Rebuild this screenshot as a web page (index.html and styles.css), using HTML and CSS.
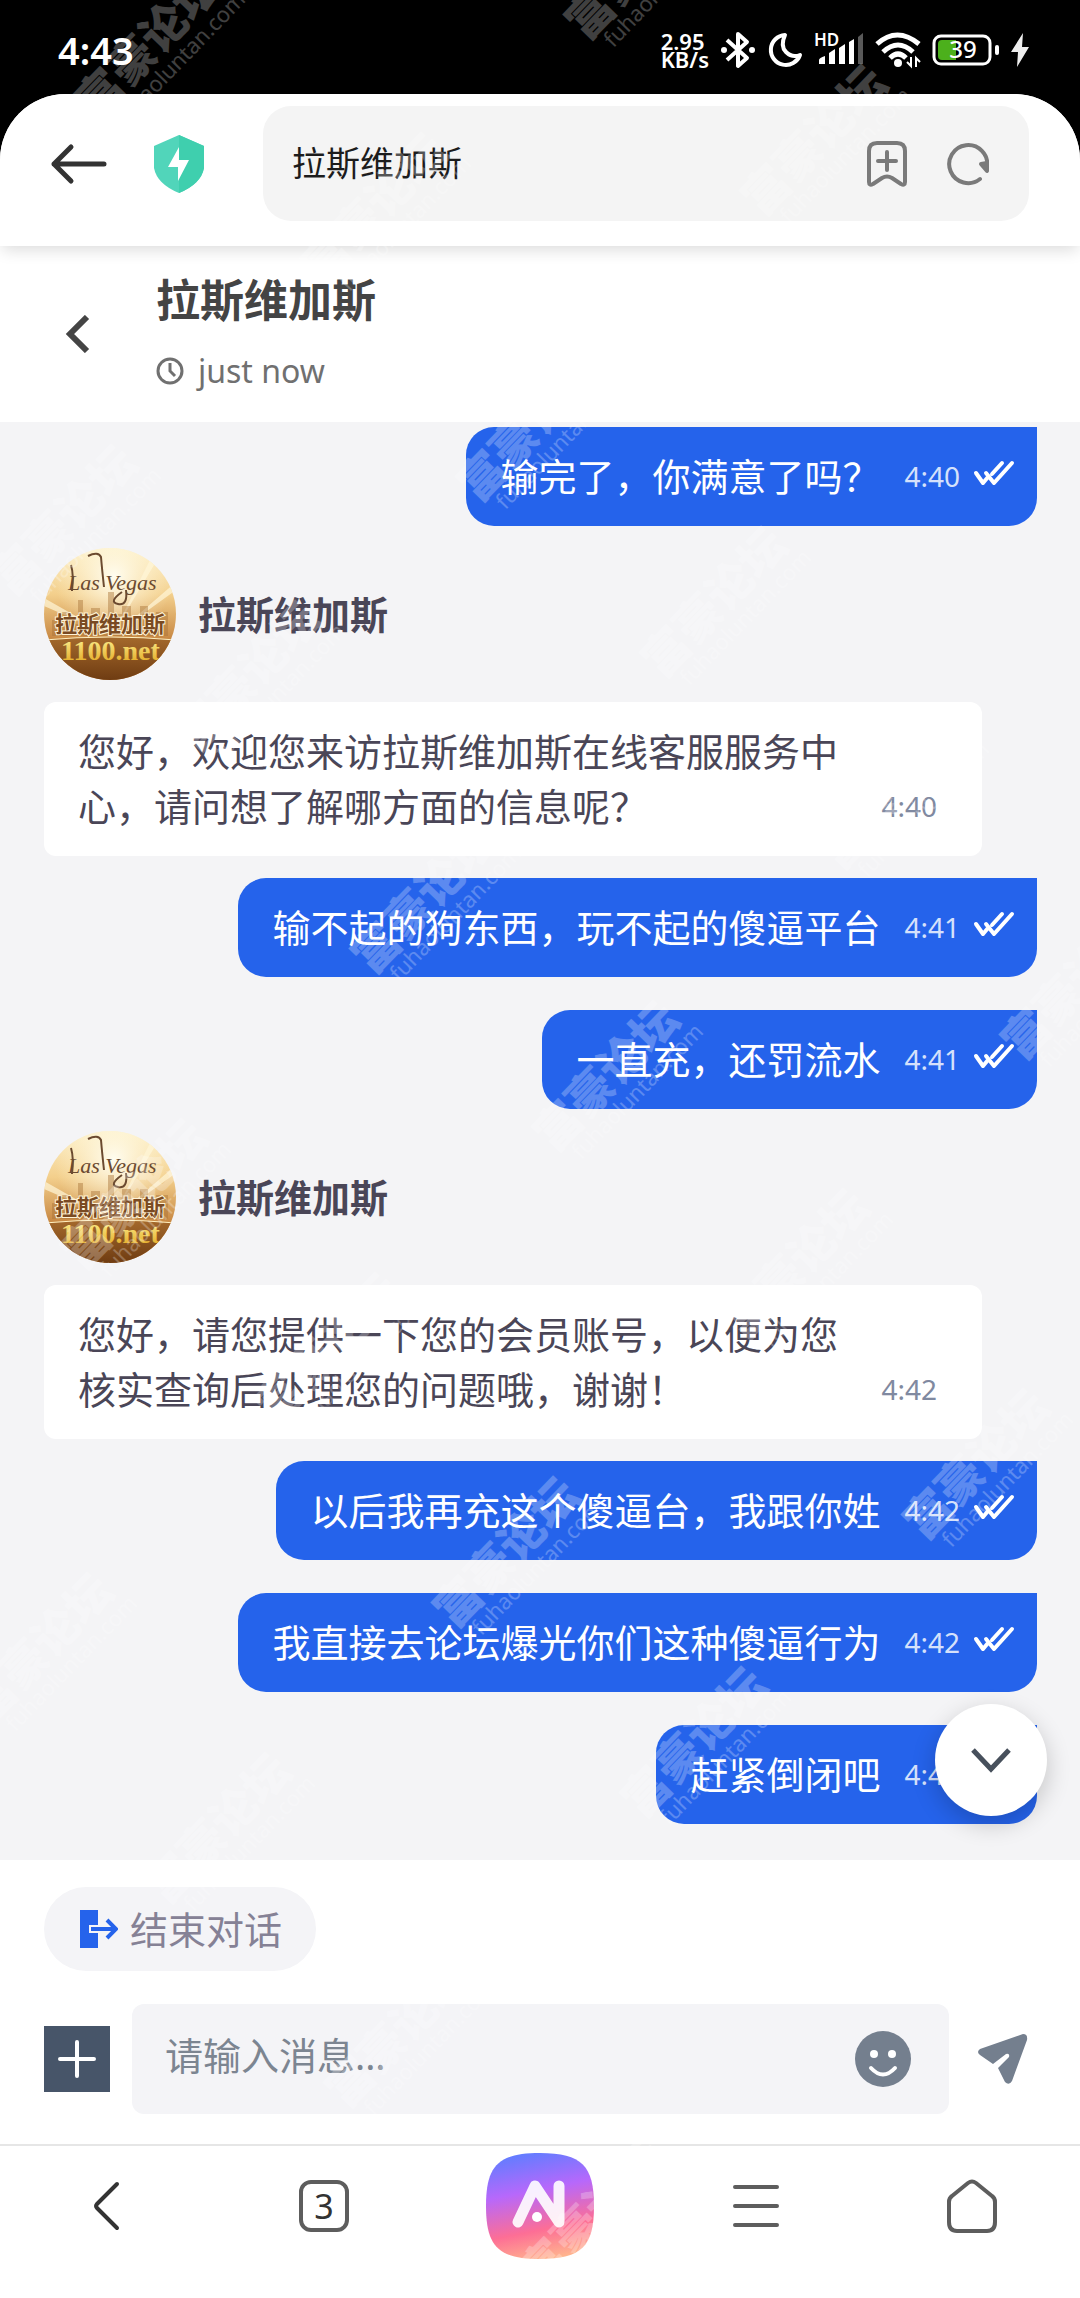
FILE: index.html
```html
<!DOCTYPE html>
<html lang="zh-CN">
<head>
<meta charset="utf-8">
<meta name="viewport" content="width=device-width, initial-scale=1">
<title>拉斯维加斯</title>
<link rel="stylesheet" href="styles.css">
</head>
<body>
<svg class="defs" aria-hidden="true">
  <defs>
    <symbol id="read" viewBox="0 0 42 26">
      <path d="M3 13l7 10 5-6M13 13l8 10L39 3M29 3L19 14" fill="none" stroke="currentColor" stroke-width="4" stroke-linecap="round" stroke-linejoin="round"/>
    </symbol>
    <linearGradient id="sky" x1="0" y1="0" x2="0" y2="1">
      <stop offset="0" stop-color="#fdf0c8"/><stop offset=".35" stop-color="#f3cf8c"/><stop offset=".68" stop-color="#c98a45"/>
    </linearGradient>
    <radialGradient id="glow"><stop offset="0" stop-color="#fffdf0"/><stop offset="1" stop-color="#fff3cf" stop-opacity="0"/></radialGradient>
    <linearGradient id="ground" x1="0" y1="0" x2="0" y2="1"><stop offset="0" stop-color="#a4692c"/><stop offset="1" stop-color="#6f3c12"/></linearGradient>
    <linearGradient id="gold" x1="0" y1="0" x2="0" y2="1"><stop offset="0" stop-color="#fff79a"/><stop offset="1" stop-color="#e0a21a"/></linearGradient>
    <clipPath id="round"><circle cx="66" cy="66" r="66"/></clipPath>
    <symbol id="avatar" viewBox="0 0 132 132">
      <g clip-path="url(#round)">
        <rect width="132" height="132" fill="url(#sky)"/>
        <circle cx="70" cy="28" r="60" fill="url(#glow)"/>
        <path d="M74 84L132 34v8zM70 84L108 8l5 4zM60 84L0 50v8z" fill="#fff6d8" opacity=".7"/>
        <path d="M8 88V72h8v-8h10v12h8V52h5v20h8V60h9v12h8V44h6v22h8v-8h9v14h9V58h8v14h8v-8h12v24z" fill="#a97438" opacity=".45"/>
        <path d="M0 92q66-6 132 0v40H0z" fill="url(#ground)"/>
        <path d="M0 92q66-6 132 0" fill="none" stroke="#fff0c0"/>
        <text class="logo-script" x="24" y="42">Las Vegas</text>
        <path d="M27 17q3 10 1 26M44 8q10-5 13 1 1 12 3 30M82 42q2 16-8 14-10-2 4-12" fill="none" stroke="#6b4a30" stroke-width="2"/>
        <text class="logo-name" x="11" y="84">拉斯维加斯</text>
        <text class="logo-url" x="17" y="112">1100.net</text>
      </g>
    </symbol>
    <g id="stamp" transform="rotate(-46)">
      <text class="stamp-name" x="-92" y="14">富豪论坛</text>
      <text class="stamp-url" x="-78" y="38">fuhaoluntan.com</text>
    </g>
  </defs>
</svg>

<header class="status">
  <time class="clock">4:43</time>
  <div class="status-icons">
    <span class="rate">2.95<br>KB/s</span>
    <svg width="36" height="38" viewBox="0 0 36 38" fill="none" stroke="#fff" stroke-width="4" aria-label="蓝牙"><path d="M7 9l20 18-9 8V3l9 8L7 29" stroke-linejoin="round"/><circle cx="4" cy="19" r="3" fill="#fff" stroke="none"/><circle cx="32" cy="19" r="3" fill="#fff" stroke="none"/></svg>
    <svg width="36" height="36" viewBox="0 0 36 36" fill="none" stroke="#fff" stroke-width="4" stroke-linejoin="round" aria-label="勿扰"><path d="M18 3A15 15 0 1 0 33 23Q25 26 19 20T18 3z"/></svg>
    <svg width="50" height="34" viewBox="0 0 50 34" fill="#fff" aria-label="信号"><text class="hd" x="0" y="13">HD</text><path d="M5 31v-4q0-2 6-4v8z M15 20l6-4v15h-6z M25 15l6-4v20h-6z M35 9l5-3v25h-5z"/><path d="M44 4l5-4v31h-5z" opacity=".35"/></svg>
    <svg width="46" height="36" viewBox="0 0 46 36" fill="none" stroke="#fff" stroke-width="5" aria-label="无线网络"><path d="M2 12Q22-6 44 12M8 20Q23 6 38 20M15 26q8-8 16 0"/><circle cx="23" cy="31" r="4" fill="#fff" stroke="none"/><path d="M36 25v9l-4-4M41 35v-9l4 4" stroke-width="2"/></svg>
    <svg width="68" height="32" viewBox="0 0 68 32" aria-label="电量"><rect x="2" y="2" width="56" height="28" rx="7" fill="none" stroke="#fff" stroke-width="3"/><path d="M10 6h14v20H10q-4 0-4-4V10q0-4 4-4z" fill="#4cb01c"/><rect x="63" y="11" width="4" height="10" rx="2" fill="#fff"/><text class="charge" x="31" y="24" text-anchor="middle">39</text></svg>
    <svg width="18" height="34" viewBox="0 0 18 34" fill="#eee" aria-label="充电中"><path d="M12 0L0 19h7l-1 15 12-20h-7z"/></svg>
  </div>
</header>

<div class="sheet">
  <div class="toolbar">
    <button class="icon-button" aria-label="返回"><svg width="58" height="42" viewBox="0 0 58 42" fill="none" stroke="#333" stroke-width="5" stroke-linecap="round" stroke-linejoin="round"><path d="M54 21H4M21 4L4 21l17 17"/></svg></button>
    <svg class="shield" width="50" height="58" viewBox="0 0 50 58" aria-label="安全"><path d="M25 0l25 11v22q-3 16-25 25Q3 49 0 33V11z" fill="#51d5ba"/><path d="M25 0l25 11v22q-3 16-25 25z" fill="#3fcfae"/><path d="M25 12L14 32h10v14l11-21H25z" fill="#fff"/></svg>
    <div class="address">
      <span class="address-title">拉斯维加斯</span>
      <button class="icon-button" aria-label="收藏"><svg width="40" height="46" viewBox="0 0 40 46" fill="none" stroke="#7a7a7a" stroke-width="4" stroke-linecap="round" stroke-linejoin="round"><path d="M2 10q0-8 8-8h20q8 0 8 8v31q0 4-4 2l-9-6q-5-3-10 0l-9 6q-4 2-4-2zM20 11v18M11 20h18"/></svg></button>
      <button class="icon-button" aria-label="刷新"><svg width="42" height="44" viewBox="0 0 42 44" fill="none" stroke="#7a7a7a" stroke-width="4" stroke-linecap="round"><path d="M33 37A19 19 0 1 1 40 25"/><path d="M34 22l6 7V21z" fill="#7a7a7a" stroke-linejoin="round"/></svg></button>
    </div>
  </div>

  <section class="chat-head">
    <button class="icon-button back" aria-label="返回"><svg width="26" height="38" viewBox="0 0 26 38" fill="none" stroke="#444" stroke-width="6"><path d="M23 2L6 19l17 17"/></svg></button>
    <div class="chat-head-text">
      <h1>拉斯维加斯</h1>
      <p class="seen"><svg width="28" height="28" viewBox="0 0 28 28" fill="none" stroke="#707070" stroke-width="3"><circle cx="14" cy="14" r="12"/><path d="M14 6v8l5 5"/></svg>just now</p>
    </div>
  </section>

  <main class="chat">
    <div class="sent"><p>输完了，你满意了吗？</p><time>4:40</time><svg class="read"><use href="#read"/></svg></div>
    <article class="received">
      <div class="sender"><svg class="avatar"><use href="#avatar"/></svg><h2>拉斯维加斯</h2></div>
      <div class="bubble"><p>您好，欢迎您来访拉斯维加斯在线客服服务中心，请问想了解哪方面的信息呢？</p><time>4:40</time></div>
    </article>
    <div class="group">
      <div class="sent"><p>输不起的狗东西，玩不起的傻逼平台</p><time>4:41</time><svg class="read"><use href="#read"/></svg></div>
      <div class="sent"><p>一直充，还罚流水</p><time>4:41</time><svg class="read"><use href="#read"/></svg></div>
    </div>
    <article class="received">
      <div class="sender"><svg class="avatar"><use href="#avatar"/></svg><h2>拉斯维加斯</h2></div>
      <div class="bubble"><p>您好，请您提供一下您的会员账号，以便为您核实查询后处理您的问题哦，谢谢！</p><time>4:42</time></div>
    </article>
    <div class="group">
      <div class="sent"><p>以后我再充这个傻逼台，我跟你姓</p><time>4:42</time><svg class="read"><use href="#read"/></svg></div>
      <div class="sent"><p>我直接去论坛爆光你们这种傻逼行为</p><time>4:42</time><svg class="read"><use href="#read"/></svg></div>
      <div class="sent"><p>赶紧倒闭吧</p><time>4:42</time><svg class="read"><use href="#read"/></svg></div>
    </div>
    <button class="scroll-down" aria-label="滚动到底部"><svg width="40" height="26" viewBox="0 0 40 26" fill="none" stroke="#47505c" stroke-width="5"><path d="M2 3l18 19L38 3"/></svg></button>
  </main>

  <form class="composer" onsubmit="return false">
    <button class="chip" type="button"><svg width="38" height="38" viewBox="0 0 38 38"><path d="M0 0h18v15H9v8h9v15H0z" fill="#2563eb"/><path d="M11 19h25M27 10l9 9-9 9" fill="none" stroke="#2563eb" stroke-width="4"/></svg>结束对话</button>
    <div class="compose-row">
      <button class="add" type="button" aria-label="添加附件"><svg width="38" height="38" viewBox="0 0 38 38" stroke="#fff" stroke-width="4" stroke-linecap="round"><path d="M19 2v34M2 19h34"/></svg></button>
      <div class="field">
        <input type="text" aria-label="消息" placeholder="请输入消息...">
        <button class="icon-button" type="button" aria-label="表情"><svg width="56" height="56" viewBox="0 0 56 56"><circle cx="28" cy="28" r="28" fill="#747f8e"/><circle cx="19" cy="23" r="4" fill="#fff"/><circle cx="37" cy="23" r="4" fill="#fff"/><path d="M16 37q12 13 24 0" fill="none" stroke="#fff" stroke-width="4" stroke-linecap="round"/></svg></button>
      </div>
      <button class="icon-button" aria-label="发送"><svg width="50" height="52" viewBox="0 0 50 52"><path d="M45 1q5 0 4 6L34 48q-3 5-7 1L20 35 31 24q1-4-3-3L15 31 2 22q-4-3 0-6z" fill="#747f8e"/></svg></button>
    </div>
  </form>

  <nav class="browser-nav" aria-label="浏览器">
    <button class="icon-button" aria-label="后退"><svg width="28" height="50" viewBox="0 0 28 50" fill="none" stroke="#333" stroke-width="4" stroke-linecap="round" stroke-linejoin="round"><path d="M23 3L3 23q-2 2 0 4l20 20"/></svg></button>
    <button class="tabs" aria-label="3 个标签页">3</button>
    <button class="icon-button" aria-label="AI">
      <svg width="108" height="106" viewBox="0 0 108 106">
        <defs><linearGradient id="ai" x1=".4" y1="0" x2=".6" y2="1"><stop offset="0" stop-color="#647cff"/><stop offset=".35" stop-color="#b768fb"/><stop offset=".72" stop-color="#fd6e95"/><stop offset="1" stop-color="#ffb58e"/></linearGradient></defs>
        <path d="M54 0c42 0 54 13 54 53s-12 53-54 53S0 93 0 53 12 0 54 0z" fill="url(#ai)"/>
        <path d="M32 69l17-36 24 36V33" fill="none" stroke="#fff" stroke-width="11" stroke-linecap="round" stroke-linejoin="round" opacity=".9"/><circle cx="51" cy="64" r="5" fill="#fff"/>
      </svg>
    </button>
    <button class="icon-button" aria-label="菜单"><svg width="46" height="44" viewBox="0 0 46 44" stroke="#5d5d5d" stroke-width="4" stroke-linecap="round"><path d="M2 3h42M2 22h42M2 41h42"/></svg></button>
    <button class="icon-button" aria-label="主页"><svg width="50" height="54" viewBox="0 0 50 54" fill="none" stroke="#5d5d5d" stroke-width="4" stroke-linejoin="round"><path d="M2 23q0-4 3-6L21 4q4-3 8 0l16 13q3 2 3 6v20q0 9-8 9H10q-8 0-8-9z"/></svg></button>
  </nav>
</div>

<svg class="watermarks" aria-hidden="true">
  <use href="#stamp" x="150" y="46"/>
  <use href="#stamp" x="640" y="-34"/>
  <use href="#stamp" x="816" y="142"/>
  <use href="#stamp" x="376" y="210"/>
  <use href="#stamp" x="532" y="428"/>
  <use href="#stamp" x="66" y="522"/>
  <use href="#stamp" x="716" y="604"/>
  <use href="#stamp" x="250" y="678"/>
  <use href="#stamp" x="426" y="900"/>
  <use href="#stamp" x="894" y="796"/>
  <use href="#stamp" x="608" y="1078"/>
  <use href="#stamp" x="1076" y="986"/>
  <use href="#stamp" x="136" y="1196"/>
  <use href="#stamp" x="798" y="1266"/>
  <use href="#stamp" x="330" y="1350"/>
  <use href="#stamp" x="508" y="1554"/>
  <use href="#stamp" x="978" y="1466"/>
  <use href="#stamp" x="42" y="1650"/>
  <use href="#stamp" x="696" y="1744"/>
  <use href="#stamp" x="220" y="1830"/>
  <use href="#stamp" x="400" y="2034"/>
  <use href="#stamp" x="594" y="2216"/>
</svg>
</body>
</html>
```
FILE: styles.css
```css
* {
  box-sizing: border-box;
}

body {
  position: relative;
  display: flex;
  flex-direction: column;
  min-height: 100vh;
  margin: 0;
  overflow-x: hidden;
  background: #000;
  font-family: "Noto Sans", "Noto Sans CJK SC", sans-serif;
  font-size: 38px;
  line-height: 55px;
  color: #4a4657;
}

h1, h2, p {
  margin: 0;
}

svg {
  display: block;
  flex: none;
}

button {
  padding: 0;
  border: 0;
  background: none;
  font: inherit;
  color: inherit;
}

.defs {
  position: absolute;
  width: 0;
  height: 0;
}

.icon-button {
  display: flex;
  flex: none;
}

/* status bar */
.status {
  display: flex;
  align-items: center;
  justify-content: space-between;
  height: 94px;
  padding: 6px 51px 0 58px;
  color: #fff;
}

.status-icons {
  display: flex;
  align-items: center;
  gap: 11px;
}

.status-icons svg {
  overflow: visible;
}

.rate {
  font-size: 22px;
  font-weight: 600;
  line-height: 18px;
}

.hd {
  font-size: 17px;
  font-weight: 600;
}

.charge {
  font-size: 24px;
  font-weight: 500;
  fill: #fff;
}

/* browser */
.sheet {
  display: flex;
  flex: 1;
  flex-direction: column;
  border-radius: 66px 66px 0 0;
  background: #fff;
}

.toolbar {
  position: relative;
  display: flex;
  align-items: center;
  padding: 12px 51px 25px 50px;
  border-radius: 66px 66px 0 0;
  background: #fff;
  box-shadow: 0 6px 16px -2px rgb(0 0 0 / 14%);
  clip-path: inset(0 0 -24px 0);
}

.shield {
  margin: 0 59px 0 46px;
}

.address {
  display: flex;
  flex: 1;
  align-items: center;
  gap: 40px;
  height: 115px;
  padding: 0 40px 0 29px;
  border-radius: 28px;
  background: #f4f4f4;
}

.address-title {
  flex: 1;
  font-size: 34px;
  color: #1c1c1c;
}

/* conversation header */
.chat-head {
  display: flex;
  align-items: center;
  gap: 66px;
  height: 176px;
  padding-left: 64px;
}

.chat-head h1 {
  font-size: 44px;
  font-weight: 600;
  line-height: 62px;
  color: #444;
}

.chat-head-text {
  display: flex;
  flex-direction: column;
  gap: 12px;
}

.seen {
  display: flex;
  align-items: center;
  gap: 14px;
  font-size: 32px;
  line-height: 56px;
  color: #707070;
}

/* messages */
.chat {
  position: relative;
  display: flex;
  flex: 1;
  flex-direction: column;
  gap: 22px;
  padding: 5px 43px 36px 44px;
  background: #f4f4f6;
}

.group {
  display: flex;
  flex-direction: column;
  gap: 33px;
}

time {
  font-size: 28px;
}

.clock {
  font-size: 38px;
  font-weight: 600;
}

.sent {
  display: flex;
  align-items: center;
  align-self: flex-end;
  padding: 22px 22px 22px 34px;
  border-radius: 28px 0 28px 28px;
  background: #2563eb;
  color: #fff;
}

.sent time {
  margin: 0 13px 0 24px;
  color: #d5e1fb;
}

.read {
  width: 42px;
  height: 26px;
  margin-bottom: 8px;
}

.sender {
  display: flex;
  align-items: center;
  gap: 22px;
  margin-bottom: 22px;
}

.sender h2 {
  font-size: 38px;
  font-weight: 600;
}

.avatar {
  width: 132px;
  height: 132px;
}

.bubble {
  display: flex;
  align-items: flex-end;
  gap: 22px;
  margin-right: 55px;
  padding: 22px 45px 22px 34px;
  border-radius: 12px;
  background: #fff;
}

.bubble p {
  flex: 1;
}

.bubble time {
  color: #8089a0;
}

.logo-script {
  font: italic 22px "Liberation Serif", serif;
  fill: #6b4a30;
}

.logo-name {
  font: 700 22px "Noto Sans CJK SC", sans-serif;
  fill: #7a4a22;
  stroke: #fff3d6;
  stroke-width: 2px;
  paint-order: stroke;
}

.logo-url {
  font: 700 28px "Liberation Serif", serif;
  fill: url(#gold);
}

.scroll-down {
  position: absolute;
  right: 33px;
  bottom: 44px;
  display: flex;
  align-items: center;
  justify-content: center;
  width: 112px;
  height: 112px;
  border-radius: 50%;
  background: #fff;
  box-shadow: 0 8px 24px rgb(0 0 0 / 20%);
}

/* composer */
.composer {
  display: flex;
  flex-direction: column;
  align-items: flex-start;
  gap: 33px;
  padding: 27px 44px 30px;
}

.chip {
  display: flex;
  align-items: center;
  gap: 12px;
  height: 84px;
  padding: 0 34px 0 36px;
  border-radius: 42px;
  background: #f4f4f7;
  color: #858195;
}

.compose-row {
  display: flex;
  align-items: center;
  align-self: stretch;
}

.add {
  display: flex;
  align-items: center;
  justify-content: center;
  width: 66px;
  height: 66px;
  margin-right: 22px;
  background: #475569;
}

.field {
  display: flex;
  flex: 1;
  align-items: center;
  height: 110px;
  margin-right: 29px;
  padding: 0 38px 0 33px;
  border-radius: 12px;
  background: #f4f4f7;
}

.field input {
  flex: 1;
  min-width: 0;
  padding: 0 0 8px;
  border: 0;
  outline: 0;
  background: none;
  font: inherit;
}

.field input::placeholder {
  color: #7c8591;
  opacity: 1;
}

.compose-row > .icon-button {
  margin-right: 8px;
}

/* browser navigation */
.browser-nav {
  display: grid;
  grid-template-columns: repeat(5, 1fr);
  align-items: center;
  justify-items: center;
  height: 154px;
  padding-bottom: 32px;
  border-top: 2px solid #e6e6e6;
}

.tabs {
  width: 50px;
  height: 52px;
  border: 4px solid #5d5d5d;
  border-radius: 12px;
  font-size: 34px;
  line-height: 44px;
  color: #333;
}

/* watermark layer */
.watermarks {
  position: absolute;
  inset: 0;
  width: 100%;
  height: 100%;
  overflow: hidden;
  pointer-events: none;
  fill: #fff;
  opacity: .25;
}

.stamp-name {
  font: 900 46px "Noto Sans CJK SC", sans-serif;
}

.stamp-url {
  font-size: 22px;
}
```
